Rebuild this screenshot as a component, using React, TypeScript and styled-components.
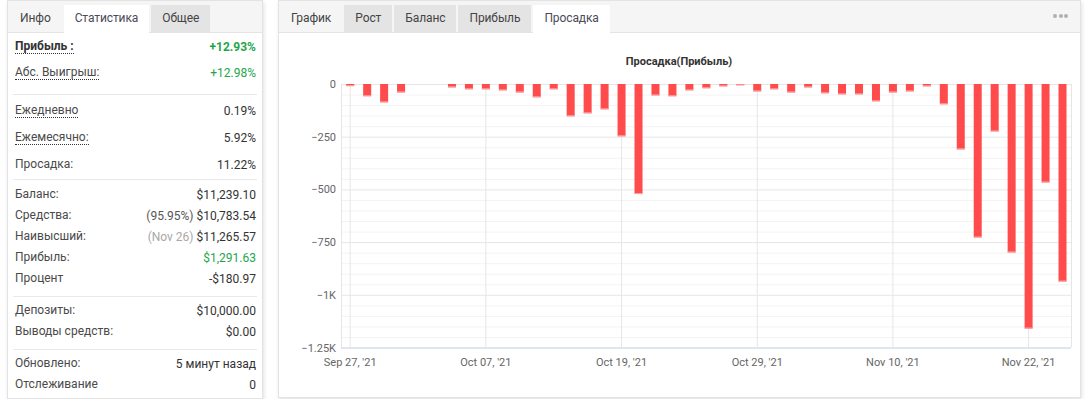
import styled, { createGlobalStyle } from "styled-components";

const GlobalStyle = createGlobalStyle`
  body {
    margin: 0;
    background: #fff;
    font-family: Roboto, "Liberation Sans", Arial, sans-serif;
    font-size: 12px;
    color: #333;
  }
`;

const Page = styled.div`
  display: flex;
  align-items: flex-start;
  gap: 15px;
  padding: 0 7px;
`;

const Card = styled.div<{ $width: number; $height?: number }>`
  width: ${(p) => p.$width}px;
  height: ${(p) => (p.$height ? `${p.$height}px` : "auto")};
  box-sizing: border-box;
  background: #fff;
  border: 1px solid #e3e3e3;
  box-shadow: 1px 2px 4px rgba(0, 0, 0, 0.12);
  display: flex;
  flex-direction: column;
`;

const TabStrip = styled.div`
  display: flex;
  align-items: flex-end;
  gap: 2px;
  height: 32px;
  box-sizing: border-box;
  padding-left: 1px;
  background: #f5f5f5;
  border-bottom: 1px solid #e4e4e4;
`;

const Tab = styled.div<{ $variant: "plain" | "gray" | "active" }>`
  height: ${(p) => (p.$variant === "active" ? 28 : 27)}px;
  margin-bottom: ${(p) => (p.$variant === "active" ? -1 : 0)}px;
  padding: 0 11px ${(p) => (p.$variant === "active" ? 3 : 2)}px;
  display: flex;
  align-items: center;
  box-sizing: border-box;
  font-size: 12px;
  letter-spacing: -0.1px;
  color: ${(p) => (p.$variant === "active" ? "#4a4a5a" : "#444")};
  background: ${(p) =>
    p.$variant === "active" ? "#fff" : p.$variant === "gray" ? "#e4e4e4" : "transparent"};
`;

const MenuDots = styled.div`
  margin-left: auto;
  align-self: center;
  padding-right: 12px;
  display: flex;
  gap: 1.5px;
  margin-bottom: 2px;
`;

const Dot = styled.span`
  width: 4px;
  height: 4px;
  border-radius: 50%;
  background: #b0b0b0;
`;

const StatsBody = styled.div`
  display: flex;
  flex-direction: column;
`;

const Section = styled.div<{ $pad: string; $last?: boolean }>`
  margin: 0 5px;
  padding: ${(p) => p.$pad};
  border-bottom: ${(p) => (p.$last ? "none" : "1px solid #e8e8e8")};
`;

const Row = styled.div<{ $h: number }>`
  height: ${(p) => p.$h}px;
  display: flex;
  align-items: center;
  justify-content: space-between;
  padding: 0 1px 0 2px;
`;

const Label = styled.span<{ $dotted?: boolean; $bold?: boolean }>`
  color: ${(p) => (p.$bold ? "#333" : "#4a4a4a")};
  font-weight: ${(p) => (p.$bold ? 700 : 400)};
  line-height: 13px;
  border-bottom: ${(p) => (p.$dotted ? "1px dotted #333" : "none")};
`;

const Value = styled.span<{ $tone?: "green" | "plain"; $bold?: boolean }>`
  color: ${(p) => (p.$tone === "green" ? "#1ea64a" : "#333")};
  font-weight: ${(p) => (p.$bold ? 700 : 400)};
`;

const Aside = styled.span<{ $light?: boolean }>`
  color: ${(p) => (p.$light ? "#a8a8a8" : "#555")};
  margin-right: 3px;
`;

const ChartSvg = styled.svg`
  display: block;
  font-family: Roboto, "Liberation Sans", Arial, sans-serif;
`;

const AxisText = styled.text`
  font-size: 11px;
  fill: #666;
`;

const TitleText = styled.text`
  font-size: 11px;
  font-weight: 700;
  fill: #333;
`;

const drawdown = [
  -10, -58, -87, -40, 0, 0, -16, -25, -25, -30, -40, -63, -25, -153, -139, -120, -248, -522,
  -54, -58, -30, -20, -11, -6, -35, -25, -40, -16, -44, -49, -49, -82, -40, -35, -11, -96,
  -310, -728, -225, -799, -1160, -467, -937,
];

const dateTicks = ["Sep 27, '21", "Oct 07, '21", "Oct 19, '21", "Oct 29, '21", "Nov 10, '21", "Nov 22, '21"];
const yTicks = [
  { v: 0, t: "0" },
  { v: -250, t: "−250" },
  { v: -500, t: "−500" },
  { v: -750, t: "−750" },
  { v: -1000, t: "−1K" },
  { v: -1250, t: "−1.25K" },
];

const PLOT_L = 62;
const PLOT_R = 792;
const ZERO_Y = 51;
const PX_PER = 263.5 / 1250;
const STEP = 16.96;
const FIRST_X = 71.2;

const yOf = (v: number) => ZERO_Y - v * PX_PER;
const xOf = (i: number) => FIRST_X + STEP * i;

const DrawdownChart = () => {
  const minor: number[] = [];
  for (let v = 0; v >= -1250; v -= 50) minor.push(v);
  const bottom = yOf(-1250);

  return (
    <ChartSvg width={801} height={364}>
      <TitleText x={400} y={32} textAnchor="middle">
        Просадка(Прибыль)
      </TitleText>

      {minor.map((v) => (
        <line
          key={v}
          x1={PLOT_L}
          x2={PLOT_R}
          y1={yOf(v) + 0.5}
          y2={yOf(v) + 0.5}
          stroke={v % 250 === 0 ? "#e6e6e6" : "#f3f3f3"}
        />
      ))}
      {dateTicks.map((_, k) => (
        <line key={k} x1={xOf(k * 8)} x2={xOf(k * 8)} y1={ZERO_Y} y2={bottom} stroke="#e6e6e6" />
      ))}
      <line x1={PLOT_L + 0.5} x2={PLOT_L + 0.5} y1={ZERO_Y} y2={bottom} stroke="#e6e6e6" />
      <line x1={PLOT_R + 0.5} x2={PLOT_R + 0.5} y1={ZERO_Y} y2={bottom} stroke="#e6e6e6" />
      <line x1={PLOT_L} x2={PLOT_R} y1={bottom + 0.5} y2={bottom + 0.5} stroke="#ccd6eb" />

      {drawdown.map((v, i) => {
        if (v === 0) return null;
        const h = -v * PX_PER;
        const x = xOf(i) - 4;
        return (
          <g key={i}>
            <rect x={x} y={ZERO_Y} width={8} height={h} fill="#ff4b4b" />
            <rect x={x} y={ZERO_Y + h - 1} width={8} height={1} fill="#f7a9a9" />
          </g>
        );
      })}

      {yTicks.map((t) => (
        <AxisText key={t.v} x={57} y={yOf(t.v) + 4} textAnchor="end">
          {t.t}
        </AxisText>
      ))}
      {dateTicks.map((d, k) => (
        <AxisText key={d} x={xOf(k * 8)} y={333} textAnchor="middle">
          {d}
        </AxisText>
      ))}
    </ChartSvg>
  );
};

const App = () => {
  return (
    <Page>
      <GlobalStyle />
      <Card $width={257}>
        <TabStrip>
          <Tab $variant="plain">Инфо</Tab>
          <Tab $variant="active">Статистика</Tab>
          <Tab $variant="gray">Общее</Tab>
        </TabStrip>
        <StatsBody>
          <Section $pad="1px 0 8px">
            <Row $h={26}>
              <Label $dotted $bold>Прибыль :</Label>
              <Value $tone="green" $bold>+12.93%</Value>
            </Row>
            <Row $h={26}>
              <Label $dotted>Абс. Выигрыш:</Label>
              <Value $tone="green">+12.98%</Value>
            </Row>
          </Section>
          <Section $pad="2px 0 1px">
            <Row $h={27}>
              <Label $dotted>Ежедневно</Label>
              <Value>0.19%</Value>
            </Row>
            <Row $h={27}>
              <Label $dotted>Ежемесячно:</Label>
              <Value>5.92%</Value>
            </Row>
            <Row $h={27}>
              <Label>Просадка:</Label>
              <Value>11.22%</Value>
            </Row>
          </Section>
          <Section $pad="4px 0 7px">
            <Row $h={21}>
              <Label>Баланс:</Label>
              <Value>$11,239.10</Value>
            </Row>
            <Row $h={21}>
              <Label>Средства:</Label>
              <Value>
                <Aside>(95.95%)</Aside>$10,783.54
              </Value>
            </Row>
            <Row $h={21}>
              <Label>Наивысший:</Label>
              <Value>
                <Aside $light>(Nov 26)</Aside>$11,265.57
              </Value>
            </Row>
            <Row $h={21}>
              <Label>Прибыль:</Label>
              <Value $tone="green">$1,291.63</Value>
            </Row>
            <Row $h={21}>
              <Label>Процент</Label>
              <Value>-$180.97</Value>
            </Row>
          </Section>
          <Section $pad="3px 0 7px">
            <Row $h={21}>
              <Label>Депозиты:</Label>
              <Value>$10,000.00</Value>
            </Row>
            <Row $h={21}>
              <Label>Выводы средств:</Label>
              <Value>$0.00</Value>
            </Row>
          </Section>
          <Section $pad="3px 0 3px" $last>
            <Row $h={21}>
              <Label>Обновлено:</Label>
              <Value>5 минут назад</Value>
            </Row>
            <Row $h={21}>
              <Label>Отслеживание</Label>
              <Value>0</Value>
            </Row>
          </Section>
        </StatsBody>
      </Card>

      <Card $width={803} $height={398}>
        <TabStrip>
          <Tab $variant="plain">График</Tab>
          <Tab $variant="gray">Рост</Tab>
          <Tab $variant="gray">Баланс</Tab>
          <Tab $variant="gray">Прибыль</Tab>
          <Tab $variant="active">Просадка</Tab>
          <MenuDots>
            <Dot />
            <Dot />
            <Dot />
          </MenuDots>
        </TabStrip>
        <DrawdownChart />
      </Card>
    </Page>
  );
};

export default App;
